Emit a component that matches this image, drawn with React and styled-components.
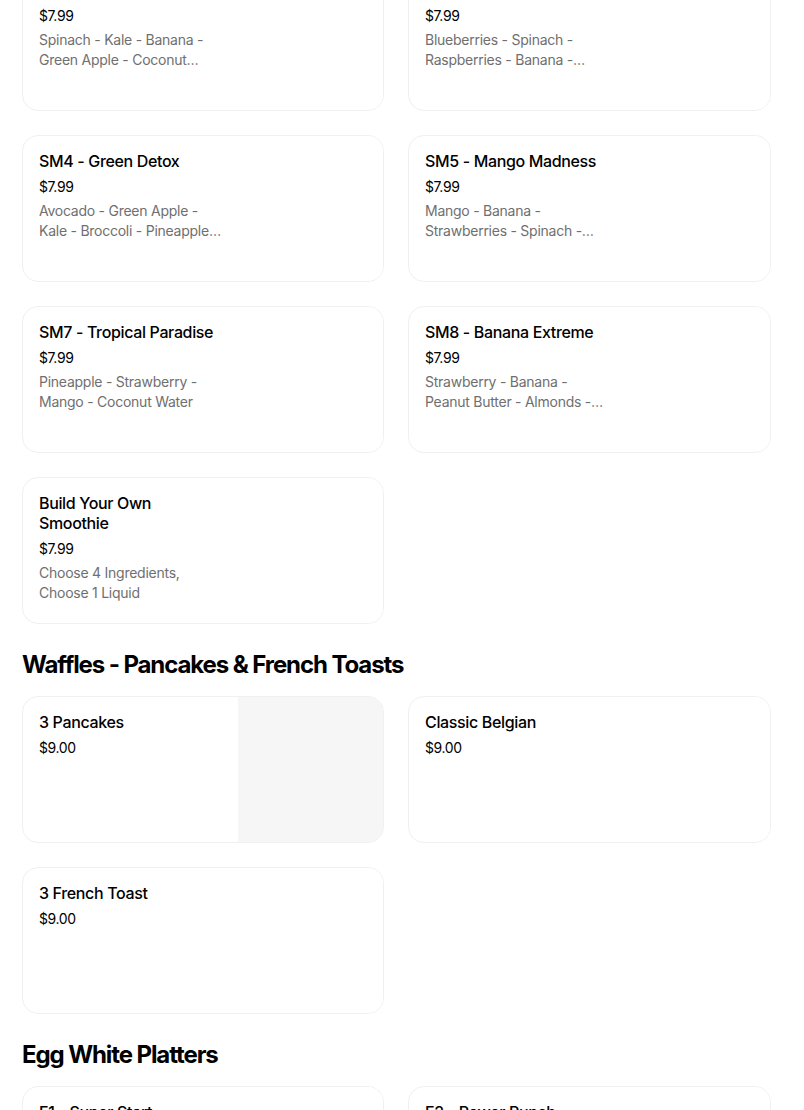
import React from "react";
import styled, { createGlobalStyle } from "styled-components";

const GlobalStyle = createGlobalStyle`
  html, body {
    margin: 0;
    padding: 0;
    background: #ffffff;
    overflow: hidden;
  }
  body {
    font-family: Inter, "Noto Sans", sans-serif;
    color: #000000;
  }
`;

const Page = styled.div`
  width: 749px;
  margin: -36px 0 0 22px;
`;

const Grid = styled.div`
  display: grid;
  grid-template-columns: 362px 363px;
  column-gap: 24px;
  row-gap: 24px;
`;

const SectionTitle = styled.h2`
  margin: 0;
  padding: 27px 0 17px;
  font-size: 24px;
  line-height: 28px;
  font-weight: 700;
  letter-spacing: -1.1px;
`;

const Card = styled.div`
  display: flex;
  height: 147px;
  box-sizing: border-box;
  border: 1px solid #f0f0f0;
  border-radius: 16px;
  overflow: hidden;
  background: #ffffff;
`;

const Info = styled.div`
  flex: 1;
  padding: 15px 16px 16px;
  min-width: 0;
`;

const Thumb = styled.div`
  width: 145px;
  flex-shrink: 0;
  background: ${(p) => (p.$empty ? "#ffffff" : "#f6f6f6")};
`;

const Name = styled.div`
  font-size: 16px;
  line-height: 20px;
  font-weight: 500;
  letter-spacing: -0.35px;
`;

const Price = styled.div`
  margin-top: 6px;
  font-size: 14px;
  line-height: 20px;
  letter-spacing: -0.4px;
`;

const Desc = styled.div`
  margin-top: 4px;
  font-size: 14px;
  line-height: 20px;
  color: #6f6f6f;
  letter-spacing: -0.25px;
  display: -webkit-box;
  -webkit-line-clamp: 2;
  -webkit-box-orient: vertical;
  overflow: hidden;
`;

const Item = ({ name, price, desc, photo }) => (
  <Card>
    <Info>
      <Name>{name}</Name>
      <Price>{price}</Price>
      {desc && <Desc>{desc}</Desc>}
    </Info>
    <Thumb $empty={!photo} />
  </Card>
);

const smoothies = [
  { name: "SM1 - Green Machine", price: "$7.99", desc: "Spinach - Kale - Banana - Green Apple - Coconut Water" },
  { name: "SM2 - Berry Blast", price: "$7.99", desc: "Blueberries - Spinach - Raspberries - Banana - Almond Milk" },
  { name: "SM4 - Green Detox", price: "$7.99", desc: "Avocado - Green Apple - Kale - Broccoli - Pineapple - Coconut Water" },
  { name: "SM5 - Mango Madness", price: "$7.99", desc: "Mango - Banana - Strawberries - Spinach - Orange Juice" },
  { name: "SM7 - Tropical Paradise", price: "$7.99", desc: "Pineapple - Strawberry - Mango - Coconut Water" },
  { name: "SM8 - Banana Extreme", price: "$7.99", desc: "Strawberry - Banana - Peanut Butter - Almonds - Almond Milk" },
  { name: "Build Your Own Smoothie", price: "$7.99", desc: "Choose 4 Ingredients, Choose 1 Liquid" },
];

const waffles = [
  { name: "3 Pancakes", price: "$9.00", photo: true },
  { name: "Classic Belgian", price: "$9.00" },
  { name: "3 French Toast", price: "$9.00" },
];

const platters = [
  { name: "E1 - Super Start", price: "$9.00" },
  { name: "E2 - Power Punch", price: "$9.00" },
];

const App = () => (
  <>
    <GlobalStyle />
    <Page>
      <Grid>
        {smoothies.map((i) => (
          <Item key={i.name} {...i} />
        ))}
      </Grid>
      <SectionTitle>Waffles - Pancakes &amp; French Toasts</SectionTitle>
      <Grid>
        {waffles.map((i) => (
          <Item key={i.name} {...i} />
        ))}
      </Grid>
      <SectionTitle>Egg White Platters</SectionTitle>
      <Grid>
        {platters.map((i) => (
          <Item key={i.name} {...i} />
        ))}
      </Grid>
    </Page>
  </>
);

export default App;
